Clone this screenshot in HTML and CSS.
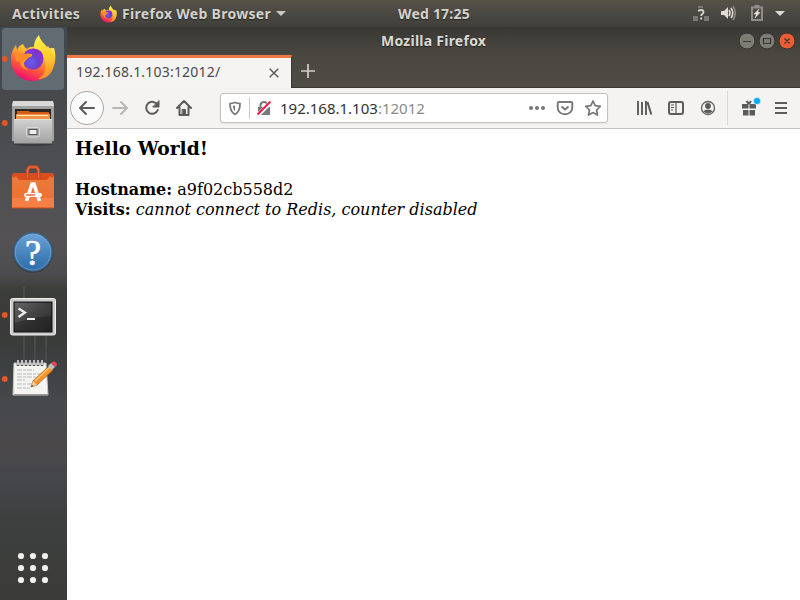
FILE: index.html
```html
<!DOCTYPE html>
<html lang="en">
<head>
<meta charset="utf-8">
<title>Mozilla Firefox</title>
<link rel="stylesheet" href="styles.css">
</head>
<body>
<svg width="0" height="0" class="defs">
  <defs>
    <linearGradient id="flame" x1=".8" y1="0" x2=".3" y2="1"><stop offset="0" stop-color="#fff44f"/><stop offset=".35" stop-color="#ffb02e"/><stop offset=".65" stop-color="#ff5b36"/><stop offset="1" stop-color="#ed0878"/></linearGradient>
    <linearGradient id="tail" x1=".4" y1="0" x2=".6" y2="1"><stop offset="0" stop-color="#fff14a"/><stop offset=".6" stop-color="#ffc52c"/><stop offset="1" stop-color="#ff8a2a"/></linearGradient>
    <radialGradient id="globe" cx=".4" cy=".65" r=".7"><stop offset="0" stop-color="#6a5cf0"/><stop offset=".55" stop-color="#6b3fc9"/><stop offset="1" stop-color="#a42be0"/></radialGradient>
    <linearGradient id="steel" x1="0" y1="0" x2="0" y2="1"><stop offset="0" stop-color="#d2d2d2"/><stop offset="1" stop-color="#a2a2a2"/></linearGradient>
    <linearGradient id="bag" x1="0" y1="0" x2="0" y2="1"><stop offset="0" stop-color="#ea7a3c"/><stop offset="1" stop-color="#f0702f"/></linearGradient>
    <linearGradient id="blue" x1="0" y1="0" x2="0" y2="1"><stop offset="0" stop-color="#69a2d6"/><stop offset="1" stop-color="#2c6ba8"/></linearGradient>
    <linearGradient id="screen" x1="0" y1="0" x2="1" y2="1"><stop offset="0" stop-color="#595959"/><stop offset=".5" stop-color="#303030"/><stop offset="1" stop-color="#222"/></linearGradient>
    <symbol id="fox" viewBox="0 0 46 48">
      <path d="M13 10c1 2 2 4 4 5 3-3 8-3 12 0l15-1c2 6 2 14-1 20-4 8-11 13-20 13C10 47 1 38 1 25c0-6 2-10 5-14l1 5c1-3 3-5 6-6Z" fill="url(#flame)"/>
      <path d="M29 1c1 5 5 8 8 12l1-1c6 7 8 17 4 25-3 6-9 8-14 8 7-4 9-11 7-18-1-6-5-10-11-13 0-6 2-10 5-13Z" fill="url(#tail)"/>
      <circle cx="23" cy="25" r="10.500" fill="url(#globe)"/>
      <path d="M12 23c2-4 6-4 10-3 1 2-1 3-4 4-1 2-4 3-4 6 0 3 2 5 5 6-5 0-9-4-9-8Z" fill="#ff982b"/>
      <path d="M5 19c6 0 10 0 14 2-2 4-5 4-7 7l-6-1Z" fill="#ff8a2a"/>
      <path d="M22 15c6-1 11 3 11 8-2-3-5-4-8-4Z" fill="#872bd4"/>
    </symbol>
  </defs>
</svg>
<header class="topbar">
  <span class="activities">Activities</span>
  <svg class="appicon" width="17" height="18"><use href="#fox"/></svg>
  <span class="appname">Firefox Web Browser</span>
  <svg class="caret" width="10" height="5" viewBox="0 0 10 5"><path d="M0 0h10L5 5Z" fill="#c9c8c3"/></svg>
  <span class="clock">Wed 17:25</span>
  <svg class="tray" width="106" height="27" viewBox="692 0 106 27">
    <path d="M698 6h5v2h-5zM693 16h5v5h-5zM704 16h5v5h-5z" fill="#7b7974"/>
    <path d="M698.700 11.500q0-1.500 2.300-1.500 2.500 0 2.500 2 0 1-1.200 2-1.100.8-1.100 2" fill="none" stroke="#d5d4cf" stroke-width="1.800"/><path d="M700.200 17.500h2v2h-2z" fill="#d5d4cf"/>
    <path d="M721 11h3l4-4v12l-4-4h-3Z" fill="#dcdbd5"/>
    <path d="M729 10q2 3 0 6M731 8q3.500 5 0 10" fill="none" stroke="#dcdbd5" stroke-width="1.600"/><path d="M733 6q4.500 7 0 14" fill="none" stroke="#8b8983" stroke-width="1.600"/>
    <path d="M752 7.500h10v12.500h-10zM754.500 6h5" fill="none" stroke="#8f8d87" stroke-width="2"/>
    <path d="m759 9-5 5h2.500l-1.500 4 5-5.500h-2.500Z" fill="#e6e5df" stroke="#e6e5df" stroke-width=".5"/>
    <path d="M775 11h10l-5 5Z" fill="#dcdbd5"/>
  </svg>
</header>
<div class="desktop">
  <nav class="dock">
    <svg width="67" height="64" viewBox="0 27 67 64"><rect x="2" y="28" width="62" height="62" rx="3.500" fill="#626b72"/><use href="#fox" x="10" y="34" width="46" height="48"/><circle cx="4.800" cy="59" r="2.900" fill="#e95420"/></svg>
    <svg width="67" height="64" viewBox="0 91 67 64">
      <ellipse cx="33" cy="144" rx="20" ry="2" fill="#292929" opacity=".5"/>
      <path d="M13 101h40l1 5v35H12v-35Z" fill="#a1a1a1"/><path d="M13 101h40l1 5H12Z" fill="#d9d9d9"/><path d="M15 109h36v11H15z" fill="#292621"/>
      <path d="M17 111h12l1 1h19v8H17z" fill="#d55d18"/><path d="M16 114h34v6H16z" fill="#f39444"/><path d="M17 115.500h31" stroke="#ffe4bc"/>
      <path d="M14 119h38v24.500H14z" fill="url(#steel)"/><path d="M14 119.500h38" stroke="#e0e0e0"/>
      <rect x="26.500" y="127.500" width="13" height="9.500" rx="1.500" fill="#aaa" stroke="#d8d8d8"/><rect x="29" y="129.500" width="8" height="5" fill="#eee" stroke="#555"/>
      <circle cx="4.800" cy="123" r="2.900" fill="#e95420"/>
    </svg>
    <svg width="67" height="64" viewBox="0 155 67 64">
      <path d="M12 175h42v33H12z" fill="url(#bag)"/><path d="M13 173h40l1 3-2 2-2-2-3 4H19l-3-4-2 2-2-2Z" fill="#d94d1e"/><path d="M12 198h42v10H12z" fill="#f57f45"/><path d="M12.500 208h41" stroke="#c74c20"/>
      <path d="M27.500 179v-9l2-3h7l2 3v9" fill="none" stroke="#c54622" stroke-width="3.500"/><path d="M27.500 178v-8l2-3h7l2 3v8" fill="none" stroke="#ed7446" stroke-width="1.200"/>
      <path d="m26.500 201 5.500-17h2l5.500 17" fill="none" stroke="#fff" stroke-width="3.600"/><rect x="24" y="193" width="18" height="4" rx="2" fill="#fff"/><path d="M26 195h9" stroke="#e9682e" stroke-width="1.500"/>
    </svg>
    <svg width="67" height="64" viewBox="0 219 67 64"><circle cx="33" cy="253" r="20" fill="#303435" opacity=".5"/><circle cx="33" cy="252" r="18.800" fill="url(#blue)" stroke="#356da1" stroke-width="1.200"/><circle cx="33" cy="252" r="17.800" fill="none" stroke="#87b5df" opacity=".5"/><text x="33" y="264.500" text-anchor="middle" class="help">?</text></svg>
    <svg width="67" height="64" viewBox="0 283 67 64">
      <path d="M24 287v60M35 336v11M46 336v11" stroke="#67696a" stroke-width=".7"/>
      <rect x="10.500" y="298.500" width="45" height="36.500" rx="2" fill="#ccc" stroke="#eee"/><rect x="14" y="302" width="38" height="30" fill="url(#screen)" stroke="#111"/><path d="M15 303h36v13q-18 1-36 7Z" fill="#fff" opacity=".08"/>
      <path d="m18.500 308.500 6.500 4-6.500 4.500" fill="none" stroke="#eee" stroke-width="2.200"/><path d="M27 319h8" stroke="#eee" stroke-width="2"/>
      <circle cx="4.800" cy="315" r="2.900" fill="#e95420"/>
    </svg>
    <svg width="67" height="64" viewBox="0 347 67 64">
      <path d="M24 347v14M35 347v14M46 347v14" stroke="#606263" stroke-width=".7"/>
      <path d="M14 363h32l2 32H13Z" fill="#f4f4f2" stroke="#c5c5c1"/><path d="M14 394.500h34" stroke="#999"/>
      <path d="M18 361v5M22 361v5M26 361v5M30 361v5M34 361v5M38 361v5M42 361v5" stroke="#555" stroke-width="2.600"/><path d="M18 360v5M22 360v5M26 360v5M30 360v5M34 360v5M38 360v5M42 360v5" stroke="#eee" stroke-width="1.400"/>
      <path d="M17 370h17M17 374h26M17 377h22M17 380h8M17 384h18M17 388h13" stroke="#aaa" stroke-width=".8" stroke-dasharray="5 1 3 1"/>
      <path d="m31 387 2-6 16-15 4 4-16 15Z" fill="#f29428" stroke="#9c5717" stroke-width=".7"/><path d="m35 381 15-14" stroke="#ffc36a" stroke-width="1.500"/><path d="m31 387 2-6 4 4Z" fill="#f4cf9e"/><path d="m31 387 1-2 1.500 1Z" fill="#222"/><path d="m48 366 3-3 4 4-3 3Z" fill="#b9bfc4"/><path d="m51 363 2-1.500q4 0 4 4L55 367Z" fill="#e2484e"/>
      <circle cx="4.800" cy="379" r="2.900" fill="#e95420"/>
    </svg>
    <svg class="grid" width="67" height="64" viewBox="0 536 67 64" fill="#f0f0ee"><circle cx="21" cy="556" r="3.100"/><circle cx="33" cy="556" r="3.100"/><circle cx="45" cy="556" r="3.100"/><circle cx="21" cy="568" r="3.100"/><circle cx="33" cy="568" r="3.100"/><circle cx="45" cy="568" r="3.100"/><circle cx="21" cy="580" r="3.100"/><circle cx="33" cy="580" r="3.100"/><circle cx="45" cy="580" r="3.100"/></svg>
  </nav>
  <main class="window">
    <div class="titlebar"><span class="wtitle">Mozilla Firefox</span>
      <svg class="controls" width="62" height="28" viewBox="738 27 62 28"><g fill="#7c7b74" stroke="#34332f"><circle cx="747" cy="41" r="8"/><circle cx="767" cy="41" r="8"/><circle cx="787" cy="41" r="8" fill="#ee5d31"/></g><path d="M743 41.500h8M763.500 38.500h7v5h-7zM784.500 38.500l5 5m0-5-5 5" fill="none" stroke="#35342f" stroke-width="1.200"/></svg>
    </div>
    <div class="tabs">
      <div class="tab"><span class="tabtitle">192.168.1.103:12012/</span><svg class="close" width="10" height="10" viewBox="0 0 10 10"><path d="m.7.7 8.600 8.600m0-8.600L.7 9.300" stroke="#5d5d5d" stroke-width="1.500"/></svg></div>
      <svg class="plus" width="14" height="14" viewBox="0 0 14 14"><path d="M7 0v14M0 7h14" stroke="#d0cec9" stroke-width="1.700"/></svg>
    </div>
    <div class="toolbar">
      <svg width="153" height="40" viewBox="67 88 153 40" fill="none" stroke="#5b5b5a" stroke-width="2" stroke-linecap="round" stroke-linejoin="round">
        <circle cx="87" cy="108" r="16.500" fill="#fbfbfb" stroke="#aaa9a6" stroke-width="1"/><path d="M94 108H80m6-6-6 6 6 6"/><path d="M113 108h14m-6-6 6 6-6 6" stroke="#b8b7b5"/><path d="M157.500 105a6 6 0 1 0 .3 5"/><path d="M159 101v6h-6Z" fill="#5b5b5a" stroke-width="1"/><path d="m177 108 7-7 7 7M179.500 107v8h9v-8"/><path d="M182.500 109.500h3v5h-3z" fill="#5b5b5a" stroke-width="1"/>
      </svg>
      <div class="urlbar">
        <svg width="59" height="28" viewBox="221 94 59 28" fill="none"><path d="M235 102.500q3 1 5 1.200 0 8-5 10.700-5-2.700-5-10.700 2-.2 5-1.200Z" stroke="#777" stroke-width="1.700"/><path d="M235 105.500v6q-2-2-2.200-5.500Z" fill="#777"/><path d="M249.500 97v22" stroke="#c9c9c9"/><path d="M258 107h12v8h-12z" fill="#777"/><path d="M260.500 108v-2.500q0-3.500 3.500-3.500t3.500 3.500v2.500" stroke="#777" stroke-width="2"/><path d="m258 115 13-13" stroke="#fff" stroke-width="4"/><path d="m257.500 114.500 13-13" stroke="#ff1744" stroke-width="2"/></svg>
        <span class="url">192.168.1.103<span class="port">:12012</span></span>
        <svg class="actions" width="82" height="28" viewBox="525 94 82 28" fill="none" stroke="#777" stroke-width="1.900" stroke-linejoin="round"><g fill="#777" stroke="none"><circle cx="531" cy="108" r="2"/><circle cx="537" cy="108" r="2"/><circle cx="543" cy="108" r="2"/></g><path d="M559 102h12q1.300 0 1.300 1.300v4.200c0 4-3.300 6.800-7.300 6.800s-7.300-2.800-7.300-6.800v-4.200Q557.700 102 559 102ZM561.500 106.500l3.500 3 3.500-3"/><path d="m593 101 2.200 4.600 5.100.8-3.700 3.600.9 5.100-4.500-2.500-4.500 2.500.9-5.100-3.700-3.600 5.100-.8Z" stroke-width="1.700"/></svg>
      </div>
      <svg class="tools" width="192" height="40" viewBox="608 88 192 40" fill="none" stroke="#5b5b5a" stroke-width="2">
        <path d="M638 101v14M642 102v13M646 101v14" stroke-width="1.900"/><path d="m647.500 102 3.800 12.500"/>
        <rect x="669" y="102" width="14" height="12" rx="2"/><path d="M676 102v12M671 105h3M671 107.500h3M671 110h2" stroke-width="1.200"/>
        <circle cx="708" cy="108" r="6.500" stroke-width="1.300"/><circle cx="708" cy="106" r="2.900" fill="#5b5b5a" stroke="none"/><path d="M703.300 111q2-1.500 4.700-1.500t4.700 1.500q-1.700 2.400-4.700 2.400t-4.700-2.400Z" fill="#5b5b5a" stroke="none"/>
        <path d="M727.500 91v34" stroke="#d9d8d6" stroke-width="1"/>
        <path d="M742 104h6.500v4.500H742zM749.500 104h6.500v4.500h-6.500zM743 110h5.500v5.500H743zM749.500 110h5.500v5.500h-5.500z" fill="#5b5b5a" stroke="none"/><path d="m749 104-2.500-3m2.500 3 2-3" /><circle cx="757" cy="101" r="3.600" fill="#00adff" stroke="#dceffa" stroke-width=".8"/>
        <path d="M775 103h12M775 108h12M775 113h12" stroke-width="1.800"/>
      </svg>
    </div>
    <article class="page"><h3>Hello World!</h3><b>Hostname:</b> a9f02cb558d2<br><b>Visits:</b> <i>cannot connect to Redis, counter disabled</i></article>
  </main>
</div>
</body>
</html>
```
FILE: styles.css
```css
* { box-sizing: border-box; }
body { margin: 0; width: 800px; height: 600px; overflow: hidden; font-family: "Noto Sans", "Open Sans", sans-serif; background: #fff; }
svg { display: block; flex: none; }
.defs { position: absolute; }
span { white-space: nowrap; }
.topbar { display: flex; align-items: center; height: 27px; background: linear-gradient(#55524a, #403f3a); color: #d3d2cd; font-size: 14px; font-weight: 700; line-height: 27px; text-shadow: 0 1px 1px #24231f; }
.activities { width: 68px; margin-left: 12px; letter-spacing: .32px; }
.appicon { margin-left: 20px; }
.appname { width: 150px; margin-left: 5px; letter-spacing: .3px; }
.caret { margin-left: 4px; }
.clock { width: 72px; margin-left: 112px; padding-bottom: 1px; letter-spacing: .2px; }
.appicon, .appname, .activities, .caret, .clock { flex: none; }
.caret { margin-left: 4px; }
.tray { margin-left: auto; margin-right: 2px; }
.desktop { display: flex; height: 573px; }
.dock { display: flex; flex-direction: column; flex: none; width: 67px; background: linear-gradient(#3f4951 0, #46484c 11%, #4e4f52 25%, #545254 37%, #4c4c4e 43%, #3b3d39 46%, #3a3b38 53%, #3d4041 59%, #46484c 65%, #4b484a 73%, #45464a 79%, #3d403f 86%, #3b3b39 100%); }
.grid { margin-top: auto; }
.help { font: 36px "Liberation Serif", serif; fill: #fff; stroke: #fff; stroke-width: .7px; }
.window { flex: 1; min-width: 0; display: flex; flex-direction: column; }
.titlebar { display: flex; height: 28px; padding-left: 314px; background: linear-gradient(#393834, #494740); }
.wtitle { color: #dad9d4; font-size: 14px; font-weight: 700; letter-spacing: .25px; line-height: 27px; text-shadow: 0 1px 1px #24231f; }
.controls { margin-left: auto; }
.tabs { display: flex; height: 33px; background: linear-gradient(#494740, #504d45); border-bottom: 1px solid #3a3833; }
.tab { display: flex; align-items: center; width: 225px; height: 33px; border-top: 3px solid #f07746; border-right: 1px solid #3a3833; background: #f5f4f2; }
.tabtitle { width: 145px; margin-left: 9px; padding-bottom: 2px; color: #4b4b4b; font-size: 14px; letter-spacing: .2px; line-height: 28px; }
.close { margin-left: 48px; }
.plus { margin: 9px 0 0 9px; }
.toolbar { display: flex; align-items: center; height: 41px; padding-bottom: 1px; background: #f4f3f1; border-bottom: 1px solid #c4c3c0; }
.urlbar { display: flex; align-items: center; width: 388px; height: 30px; border: 1px solid #c2c1bf; border-radius: 3px; background: #fff; box-shadow: 0 1px 2px #0001; }
.url { color: #333; font-size: 15px; line-height: 28px; }
.port { color: #8b8b8b; }
.actions { margin-left: auto; }
.page { flex: 1; padding: 9px 8px; color: #000; font: 16px/20px "DejaVu Serif", serif; background: #fff; }
.page h3 { margin: 0 0 22px; font-size: 18.72px; line-height: 20px; }
```
